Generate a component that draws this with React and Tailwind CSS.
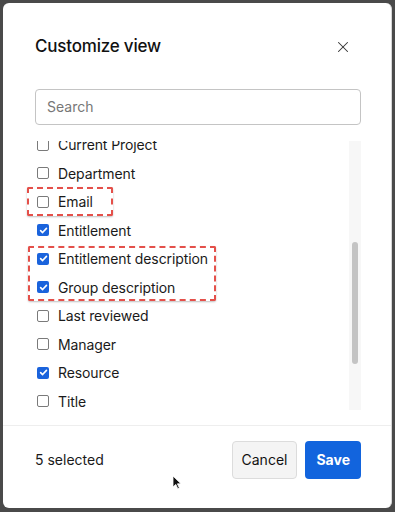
import { X } from 'lucide-react'

const items = [
  { label: 'Current Project', checked: false },
  { label: 'Department', checked: false },
  { label: 'Email', checked: false },
  { label: 'Entitlement', checked: true },
  { label: 'Entitlement description', checked: true },
  { label: 'Group description', checked: true },
  { label: 'Last reviewed', checked: false },
  { label: 'Manager', checked: false },
  { label: 'Resource', checked: true },
  { label: 'Title', checked: false },
]

function Box({ checked }) {
  if (checked) {
    return (
      <span className="flex h-[12px] w-[12px] items-center justify-center rounded-[2px] bg-[#1a63dc]">
        <svg width="9" height="9" viewBox="0 0 10 10" fill="none">
          <path d="M1.8 5.2 4 7.3 8.3 2.6" stroke="white" strokeWidth="1.8" strokeLinecap="round" strokeLinejoin="round" />
        </svg>
      </span>
    )
  }
  return <span className="h-[12px] w-[12px] rounded-[2px] border border-[#7a7a7a] bg-white" />
}

export default function App() {
  return (
    <div className="h-[512px] w-[395px] bg-[#4a4a4a] pl-[3px] pt-[3px] font-['Inter',sans-serif]">
      <div className="relative flex h-[505px] w-[389px] flex-col rounded-[6px] border-r border-[#d6d6d6] bg-white">
        {/* header */}
        <div className="flex items-center justify-between pl-[32px] pr-[39px] pt-[31px]">
          <h2 className="text-[17px] font-medium tracking-[-0.2px] text-[#111]">Customize view</h2>
          <X size={18} strokeWidth={1.4} className="text-[#333]" />
        </div>

        <div className="pl-[32px] pr-[30px] pt-[29px]">
          <div className="flex h-[36px] items-center rounded-[4px] border border-[#c4c4c4] px-[11px] text-[14px] text-[#777]">
            Search
          </div>
        </div>

        {/* list */}
        <div className="relative mt-[16px] flex h-[269px] pl-[34px] pr-[30px]">
          <div className="h-full flex-1 overflow-hidden">
            <div className="-mt-[10px]">
              {items.map((it) => (
                <div key={it.label} className="flex h-[28.5px] items-center gap-[9px] text-[14px] tracking-[-0.1px] text-[#1a1a1a]">
                  <Box checked={it.checked} />
                  <span>{it.label}</span>
                </div>
              ))}
            </div>
          </div>
          <div className="flex h-full w-[12px] justify-center bg-[#f7f7f7] pt-[101px]">
            <div className="h-[122px] w-[6px] rounded-full bg-[#c4c4c4]" />
          </div>

          {/* annotation boxes */}
          <div className="absolute left-[24px] top-[46px] h-[29px] w-[86px] rounded-[2px] border-2 border-dashed border-[#e4504a] shadow-[0_1px_2px_rgba(0,0,0,0.25)]" />
          <div className="absolute left-[25px] top-[105px] h-[55px] w-[188px] rounded-[2px] border-2 border-dashed border-[#e4504a] shadow-[0_1px_2px_rgba(0,0,0,0.25)]" />
        </div>

        {/* footer */}
        <div className="mt-[15px] flex flex-1 items-center justify-between border-t border-[#eeeeee] pl-[32px] pr-[30px] pb-[14px]">
          <span className="text-[14px] text-[#1a1a1a]">5 selected</span>
          <div className="flex gap-[8px]">
            <button className="h-[38px] rounded-[4px] border border-[#dcdcdc] bg-[#f4f4f4] px-[9px] text-[14px] text-[#111]">
              Cancel
            </button>
            <button className="h-[38px] rounded-[4px] bg-[#1264dd] px-[11px] text-[14px] font-bold text-white">
              Save
            </button>
          </div>
        </div>

        {/* mouse pointer */}
        <svg className="absolute left-[169px] top-[472px]" width="10" height="15" viewBox="0 0 10 15">
          <path d="M1 1v11l2.8-2.6 2 4.4 1.6-.7-2-4.3H9z" fill="#111" stroke="white" strokeWidth="0.8" />
        </svg>
      </div>
    </div>
  )
}
